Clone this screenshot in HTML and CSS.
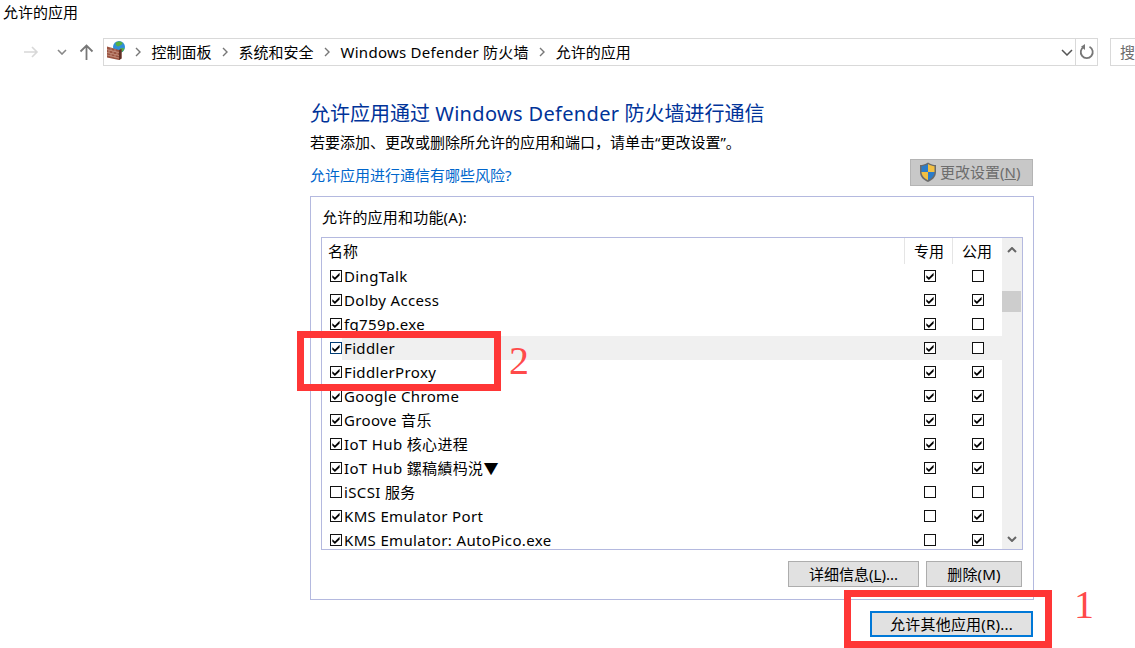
FILE: index.html
```html
<!DOCTYPE html>
<html lang="zh-CN">
<head>
<meta charset="utf-8">
<title>允许的应用</title>
<link rel="stylesheet" href="styles.css">
</head>
<body>
<svg class="defs" width="0" height="0" aria-hidden="true">
  <symbol id="on" viewBox="0 0 12 12">
    <rect x="0.5" y="0.5" width="11" height="11" fill="#fff" stroke="currentColor"/>
    <path d="M2.300 5.200 L4.900 7.400 L9.600 2.800 V5.400 L4.900 9.900 L2.300 7.500Z" fill="#000"/>
  </symbol>
  <symbol id="off" viewBox="0 0 12 12">
    <rect x="0.5" y="0.5" width="11" height="11" fill="#fff" stroke="currentColor"/>
  </symbol>
</svg>
<div class="titlebar">允许的应用</div>
<div class="toolbar">
  <svg class="nav back" width="16" height="12" viewBox="0 0 16 12"><path d="M1 6H14M9 1l5 5-5 5" fill="none" stroke="#d8d8d8" stroke-width="1.6"/></svg>
  <svg class="nav drop" width="10" height="6" viewBox="0 0 10 6"><path d="M1 1l4 4 4-4" fill="none" stroke="#888" stroke-width="1.6"/></svg>
  <svg class="nav up" width="15" height="16" viewBox="0 0 15 16"><path d="M7.5 16V2M1.5 7.5l6-6 6 6" fill="none" stroke="#777" stroke-width="1.8"/></svg>
  <div class="address">
    <svg class="wall" width="20" height="20" viewBox="0 0 20 20">
      <circle cx="13" cy="6" r="6" fill="#2f8fd8"/>
      <path d="M9.500 2c2-2 6-2 7 0 0 2-2.500 2-3.500 3s-3.500 0-3.500-3zM14 7.500c2-1 3.700-.5 4.500 0-.5 2-2.200 3.800-4.500 3.800z" fill="#56b044"/>
      <path d="M1 5.500 L13 9 L15.500 8 V17.500 L13 19 L1 16.500z" fill="#9a5240"/>
      <path d="M13 9 L15.500 8 V17.500 L13 19z" fill="#5f2f24"/>
      <path d="M1 8.500 L13 11.500M1 11.500 L13 14.500M1 14 L13 17M5 6.500V9.500M9 7.800V10.800M3 9v3M7 10v3M11 11v3M5 12.500v3M9 13.500v3" stroke="#cf9f8c" stroke-width=".7" fill="none"/>
    </svg>
    <span class="crumbs">
      <svg class="sep" width="6" height="10" viewBox="0 0 6 10"><path d="M1 1l4 4-4 4" fill="none" stroke="#777" stroke-width="1.4"/></svg>
      <span>控制面板</span>
      <svg class="sep" width="6" height="10" viewBox="0 0 6 10"><path d="M1 1l4 4-4 4" fill="none" stroke="#777" stroke-width="1.4"/></svg>
      <span>系统和安全</span>
      <svg class="sep" width="6" height="10" viewBox="0 0 6 10"><path d="M1 1l4 4-4 4" fill="none" stroke="#777" stroke-width="1.4"/></svg>
      <span class="latin">Windows Defender 防火墙</span>
      <svg class="sep" width="6" height="10" viewBox="0 0 6 10"><path d="M1 1l4 4-4 4" fill="none" stroke="#777" stroke-width="1.4"/></svg>
      <span>允许的应用</span>
    </span>
    <svg class="addr-drop" width="12" height="7" viewBox="0 0 12 7"><path d="M1 1l5 5 5-5" fill="none" stroke="#555" stroke-width="1.5"/></svg>
    <span class="refresh">
      <svg width="16" height="16" viewBox="0 0 16 16"><path d="M5 2.800A6 6 0 1 0 10.500 2.800" fill="none" stroke="#777" stroke-width="1.800"/><path d="M6 0V6L2 2.800z" fill="#777"/></svg>
    </span>
  </div>
  <div class="search">搜</div>
</div>

<main class="content">
  <h1 class="heading">允许应用通过 <span class="latin-lg">Windows Defender</span> 防火墙进行通信</h1>
  <p class="intro">若要添加、更改或删除所允许的应用和端口，请单击“更改设置”。</p>
  <div class="linkrow">
    <a class="risk" href="#">允许应用进行通信有哪些风险?</a>
    <span class="btn btn-disabled">
      <svg width="22" height="22" viewBox="0 0 22 22">
        <path d="M11 1.500C8 3.500 5.500 4 3 4v7c0 5 3.500 8 8 10 4.500-2 8-5 8-10V4c-2.500 0-5-.5-8-2.500z" fill="#6b6b6b"/>
        <path d="M11 3C8.500 4.500 6.500 5 4.500 5.200V11H11z" fill="#2c7cc9"/>
        <path d="M11 3c2.500 1.500 4.500 2 6.500 2.200V11H11z" fill="#f2c043"/>
        <path d="M4.500 11H11v8.200C7.500 17.500 4.800 15 4.500 11z" fill="#f2c043"/>
        <path d="M17.500 11H11v8.200c3.500-1.700 6.200-4.200 6.500-8.200z" fill="#2c7cc9"/>
      </svg>
      <span>更改设置(<u>N</u>)</span>
    </span>
  </div>

  <section class="panel">
    <div class="panel-label">允许的应用和功能(A):</div>
    <div class="listbox">
      <div class="table">
        <div class="row head">
          <div class="name-h">名称</div>
          <div class="col-h">专用</div>
          <div class="col-h">公用</div>
        </div>
        <div class="row"><span class="chk"><svg class="cb"><use href="#on"/></svg></span><div class="body"><span class="name">DingTalk</span><span class="cell"><svg class="cb"><use href="#on"/></svg></span><span class="cell"><svg class="cb"><use href="#off"/></svg></span></div></div>
        <div class="row"><span class="chk"><svg class="cb"><use href="#on"/></svg></span><div class="body"><span class="name">Dolby Access</span><span class="cell"><svg class="cb"><use href="#on"/></svg></span><span class="cell"><svg class="cb"><use href="#on"/></svg></span></div></div>
        <div class="row"><span class="chk"><svg class="cb"><use href="#on"/></svg></span><div class="body"><span class="name">fg759p.exe</span><span class="cell"><svg class="cb"><use href="#on"/></svg></span><span class="cell"><svg class="cb"><use href="#off"/></svg></span></div></div>
        <div class="row selected"><span class="chk"><svg class="cb"><use href="#on"/></svg></span><div class="body"><span class="name">Fiddler</span><span class="cell"><svg class="cb"><use href="#on"/></svg></span><span class="cell"><svg class="cb"><use href="#off"/></svg></span></div></div>
        <div class="row"><span class="chk"><svg class="cb"><use href="#on"/></svg></span><div class="body"><span class="name">FiddlerProxy</span><span class="cell"><svg class="cb"><use href="#on"/></svg></span><span class="cell"><svg class="cb"><use href="#on"/></svg></span></div></div>
        <div class="row"><span class="chk"><svg class="cb"><use href="#on"/></svg></span><div class="body"><span class="name">Google Chrome</span><span class="cell"><svg class="cb"><use href="#on"/></svg></span><span class="cell"><svg class="cb"><use href="#on"/></svg></span></div></div>
        <div class="row"><span class="chk"><svg class="cb"><use href="#on"/></svg></span><div class="body"><span class="name">Groove 音乐</span><span class="cell"><svg class="cb"><use href="#on"/></svg></span><span class="cell"><svg class="cb"><use href="#on"/></svg></span></div></div>
        <div class="row"><span class="chk"><svg class="cb"><use href="#on"/></svg></span><div class="body"><span class="name">IoT Hub 核心进程</span><span class="cell"><svg class="cb"><use href="#on"/></svg></span><span class="cell"><svg class="cb"><use href="#on"/></svg></span></div></div>
        <div class="row"><span class="chk"><svg class="cb"><use href="#on"/></svg></span><div class="body"><span class="name">IoT Hub 鏍稿績杩涚▼</span><span class="cell"><svg class="cb"><use href="#on"/></svg></span><span class="cell"><svg class="cb"><use href="#on"/></svg></span></div></div>
        <div class="row"><span class="chk"><svg class="cb"><use href="#off"/></svg></span><div class="body"><span class="name">iSCSI 服务</span><span class="cell"><svg class="cb"><use href="#off"/></svg></span><span class="cell"><svg class="cb"><use href="#off"/></svg></span></div></div>
        <div class="row"><span class="chk"><svg class="cb"><use href="#on"/></svg></span><div class="body"><span class="name">KMS Emulator Port</span><span class="cell"><svg class="cb"><use href="#off"/></svg></span><span class="cell"><svg class="cb"><use href="#on"/></svg></span></div></div>
        <div class="row"><span class="chk"><svg class="cb"><use href="#on"/></svg></span><div class="body"><span class="name">KMS Emulator: AutoPico.exe</span><span class="cell"><svg class="cb"><use href="#off"/></svg></span><span class="cell"><svg class="cb"><use href="#on"/></svg></span></div></div>
      </div>
      <div class="scrollbar">
        <span class="arrow"><svg width="10" height="6" viewBox="0 0 10 6"><path d="M1 5l4-4 4 4" fill="none" stroke="#666" stroke-width="2"/></svg></span>
        <span class="thumb"></span>
        <span class="arrow bottom"><svg width="10" height="6" viewBox="0 0 10 6"><path d="M1 1l4 4 4-4" fill="none" stroke="#666" stroke-width="2"/></svg></span>
      </div>
    </div>
    <div class="panel-actions">
      <span class="btn btn-details">详细信息(<u>L</u>)...</span>
      <span class="btn btn-remove">删除(M)</span>
    </div>
  </section>
  <div class="footer">
    <span class="btn btn-allow">允许其他应用(R)...</span>
  </div>
</main>

<div class="mark mark-one"></div>
<div class="mark mark-two"></div>
<div class="num num-one">1</div>
<div class="num num-two">2</div>
</body>
</html>
```
FILE: styles.css
```css
* { box-sizing: border-box; }
html, body { margin: 0; height: 648px; overflow: hidden; }
body {
  position: relative;
  background: #fff;
  color: #000;
  font: 15px/20px "Noto Sans", "Noto Sans CJK SC", sans-serif;
}
.defs { position: absolute; }
.titlebar { height: 26px; padding: 2px 0 0 3px; }

.toolbar { display: flex; align-items: center; height: 28px; margin-top: 12px; }
.nav { flex: none; }
.back { margin-left: 23px; }
.drop { margin-left: 18px; }
.up { margin-left: 12px; }
.address {
  display: flex; align-items: center;
  width: 995px; height: 28px; margin-left: 9px;
  border: 1px solid #d9d9d9;
  padding-left: 2px;
}
.wall { flex: none; margin-top: -3px; }
.crumbs { display: flex; align-items: center; gap: 10.5px; margin-left: 9px; flex: 1; white-space: nowrap; padding-bottom: 1px; }
.latin { letter-spacing: .26px; }
.addr-drop { margin-right: 2px; }
.refresh {
  display: flex; align-items: center; justify-content: center;
  width: 22px; height: 26px; border-left: 1px solid #d9d9d9; padding-left: 1px;
}
.search {
  flex: 1; height: 28px; margin-left: 12px;
  border: 1px solid #d9d9d9; border-right: 0;
  padding: 3px 0 0 9px; color: #6d6d6d;
}

.content { width: 724px; margin-left: 310px; }
.heading { margin: 34px 0 0; font-size: 20px; font-weight: 400; line-height: 28px; color: #003399; }
.latin-lg { letter-spacing: .33px; }
.intro { margin: 4px 0 0; line-height: 20px; }
.linkrow { display: flex; justify-content: space-between; align-items: center; height: 27px; margin-top: 7px; }
.risk { color: #0066cc; text-decoration: none; margin-top: 5px; }

.btn {
  display: flex; align-items: center; justify-content: center;
  background: #e1e1e1; border: 1px solid #adadad; height: 26px; white-space: nowrap;
}
.btn-disabled {
  width: 123px; height: 27px; margin-right: 1px;
  justify-content: flex-start; padding: 0 0 1px 6px;
  background: #c8c8c8; border-color: #b4b4b4; color: #6d6d6d;
}
.btn-disabled svg { margin-right: 1px; }

.panel {
  height: 404px; margin-top: 10px;
  border: 1px solid #b4b9df; padding: 10px 10px 0;
}
.panel-label { height: 20px; line-height: 20px; margin-left: 1px; letter-spacing: .2px; }
.listbox {
  display: flex; height: 313px; margin-top: 10px;
  border: 1px solid #b4b9df; overflow: hidden;
}
.table { width: 680px; flex: none; }
.row { display: flex; height: 24px; }
.head { height: 26px; padding-right: 2px; }
.name-h { flex: 1; padding-left: 6px; line-height: 26px; }
.col-h { width: 48px; text-align: center; border-left: 1px solid #e5e5e5; line-height: 26px; padding-left: 1px; }
.chk { width: 20px; flex: none; display: flex; align-items: center; padding-left: 8px; }
.body { flex: 1; display: flex; align-items: center; }
.selected .body { background: #f0f0f0; }
.selected .chk .cb { color: #003c74; }
.name { flex: 1; padding-left: 2px; white-space: nowrap; letter-spacing: .35px; }
.cell { width: 48px; display: flex; justify-content: center; }
.cb { display: block; width: 12px; height: 12px; color: #111; }

.scrollbar { position: relative; flex: none; width: 20px; background: #f0f0f0; display: flex; flex-direction: column; }
.arrow { display: flex; align-items: center; justify-content: center; height: 24px; }
.bottom { position: absolute; left: 0; right: 0; top: 289px; }
.thumb { height: 21px; margin: 29px 1px 0 0; background: #cdcdcd; }

.panel-actions { display: flex; justify-content: flex-end; gap: 7px; margin-top: 11px; margin-right: 1px; }
.btn-details { width: 131px; }
.btn-remove { width: 96px; letter-spacing: .2px; }
.footer { display: flex; justify-content: flex-end; margin-top: 11px; padding-right: 1px; }
.btn-allow { width: 163px; border: 2px solid #0078d7; letter-spacing: .2px; }

.mark { position: absolute; border: 7px solid #ff3636; }
.mark-one { left: 844px; top: 590px; width: 208px; height: 58px; }
.mark-two { left: 297px; top: 331px; width: 204px; height: 60px; }
.num { position: absolute; font-family: "Liberation Serif", serif; color: #ff4a4a; font-size: 40px; line-height: 40px; }
.num-one { left: 1074px; top: 585px; }
.num-two { left: 509px; top: 341px; }
```
